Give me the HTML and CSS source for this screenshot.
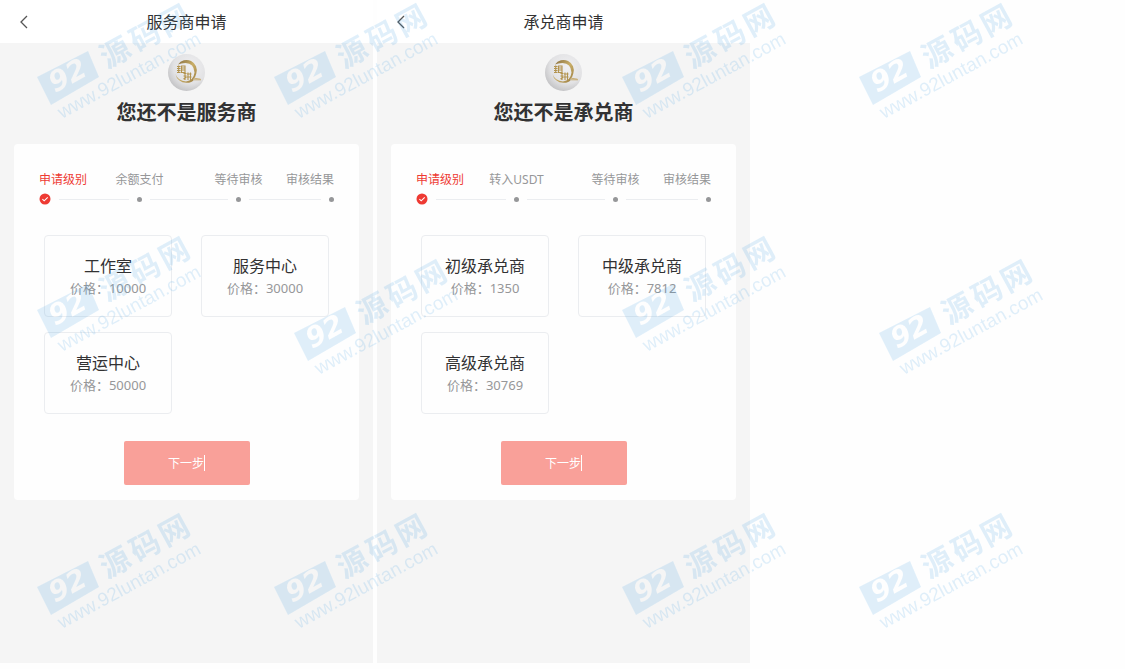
FILE: index.html
```html
<!DOCTYPE html>
<html lang="zh-CN">
<head>
  <meta charset="UTF-8">
  <meta name="viewport" content="width=device-width, initial-scale=1.0">
  <title>服务商申请</title>
  <link rel="stylesheet" href="styles.css">
</head>
<body>
  <!-- shared shapes -->
  <svg class="defs" width="0" height="0" aria-hidden="true">
    <defs>
      <radialGradient id="ball" cx="60%" cy="35%" r="75%">
        <stop offset="0" stop-color="#f0f0f2"/>
        <stop offset="0.6" stop-color="#e2e2e4"/>
        <stop offset="1" stop-color="#bababc"/>
      </radialGradient>
      <linearGradient id="gold" x1="0" y1="0" x2="1" y2="1">
        <stop offset="0" stop-color="#80673a"/>
        <stop offset="0.5" stop-color="#c9ae68"/>
        <stop offset="1" stop-color="#9a7c40"/>
      </linearGradient>
      <symbol id="logo" viewBox="0 0 37 37">
        <circle cx="18.5" cy="18.5" r="18.5" fill="url(#ball)"/>
        <path d="M10 10.5A10.3 10.3 0 0 1 28.3 19.5Q27.6 23.5 25 25.4L26.2 25.4Q24 28.7 18.5 28.8Q9.5 28.6 7.4 20Q10.2 27.2 18 27.4Q25.5 26.8 26.5 18.5Q26 9.3 17.5 9Q13 9 10 10.5Z" fill="url(#gold)"/>
        <path d="M26 24.2L32.5 25.2M26 25.8H33" fill="none" stroke="#c3a667" stroke-width="0.9"/>
        <g fill="none" stroke="#b39450" stroke-width="1.1">
          <path d="M9 12.5H12.5M9 14.5H12.5M9 16.5H12.5M10.7 11.5V18.5M9 18.5H12.5M13.5 12H17V18.5H13.5ZM13.5 14H17M13.5 16H17"/>
          <path d="M15.5 19.5H18.5M15.5 22H18.5M17 18.5V26M15.5 25L18.5 23M20 18.5V26M22.5 18.5V26M19 20H23.5M19 23H23.5"/>
        </g>
      </symbol>
      <symbol id="check" viewBox="0 0 12 12">
        <circle cx="6" cy="6" r="5.5" fill="#ee3a33"/>
        <path d="M3.4 6.1L5.2 7.8L8.7 4.4" fill="none" stroke="#fff" stroke-width="1.1"/>
      </symbol>
      <!-- number is cut out of the blue plate -->
      <mask id="plate" maskUnits="userSpaceOnUse" x="0" y="40" width="70" height="70">
        <rect x="0" y="40" width="70" height="70" fill="#fff"/>
        <text class="mark-num" transform="translate(18 93) rotate(-28.5)">92</text>
      </mask>
      <symbol id="mark" viewBox="0 0 170 124" overflow="visible">
        <g fill="#2a94e0" opacity="0.14">
          <path d="M0 77L51 51L62 77L14 105Z" mask="url(#plate)"/>
          <text class="mark-url" transform="translate(25 119) rotate(-28.5)">www.92luntan.com</text>
          <text class="mark-name" x="0 34 67" transform="translate(70 69) rotate(-28.5)">源码网</text>
        </g>
      </symbol>
    </defs>
  </svg>

  <main class="screens">
    <section class="screen">
      <header class="nav">
        <button class="back" type="button" aria-label="返回">
          <svg width="10" height="14" viewBox="0 0 10 14"><path d="M8 1L2 7L8 13"/></svg>
        </button>
        <h1 class="nav-title">服务商申请</h1>
      </header>
      <div class="intro">
        <svg class="logo" width="37" height="37" aria-hidden="true"><use href="#logo"/></svg>
        <h2 class="intro-title">您还不是服务商</h2>
      </div>
      <div class="card">
        <ol class="steps">
          <li class="step active">
            <span class="step-name">申请级别</span>
            <span class="step-track"><svg class="step-check" width="12" height="12"><use href="#check"/></svg></span>
          </li>
          <li class="step">
            <span class="step-name">余额支付</span>
            <span class="step-track"><i class="dot"></i></span>
          </li>
          <li class="step">
            <span class="step-name">等待审核</span>
            <span class="step-track"><i class="dot"></i></span>
          </li>
          <li class="step">
            <span class="step-name">审核结果</span>
            <span class="step-track"><i class="dot"></i></span>
          </li>
        </ol>
        <div class="levels">
          <button class="level" type="button"><span class="level-name">工作室</span><span class="level-price">价格：10000</span></button>
          <button class="level" type="button"><span class="level-name">服务中心</span><span class="level-price">价格：30000</span></button>
          <button class="level" type="button"><span class="level-name">营运中心</span><span class="level-price">价格：50000</span></button>
        </div>
        <button class="next" type="button">下一步</button>
      </div>
    </section>

    <section class="screen">
      <header class="nav">
        <button class="back" type="button" aria-label="返回">
          <svg width="10" height="14" viewBox="0 0 10 14"><path d="M8 1L2 7L8 13"/></svg>
        </button>
        <h1 class="nav-title">承兑商申请</h1>
      </header>
      <div class="intro">
        <svg class="logo" width="37" height="37" aria-hidden="true"><use href="#logo"/></svg>
        <h2 class="intro-title">您还不是承兑商</h2>
      </div>
      <div class="card">
        <ol class="steps">
          <li class="step active">
            <span class="step-name">申请级别</span>
            <span class="step-track"><svg class="step-check" width="12" height="12"><use href="#check"/></svg></span>
          </li>
          <li class="step">
            <span class="step-name">转入USDT</span>
            <span class="step-track"><i class="dot"></i></span>
          </li>
          <li class="step">
            <span class="step-name">等待审核</span>
            <span class="step-track"><i class="dot"></i></span>
          </li>
          <li class="step">
            <span class="step-name">审核结果</span>
            <span class="step-track"><i class="dot"></i></span>
          </li>
        </ol>
        <div class="levels">
          <button class="level" type="button"><span class="level-name">初级承兑商</span><span class="level-price">价格：1350</span></button>
          <button class="level" type="button"><span class="level-name">中级承兑商</span><span class="level-price">价格：7812</span></button>
          <button class="level" type="button"><span class="level-name">高级承兑商</span><span class="level-price">价格：30769</span></button>
        </div>
        <button class="next" type="button">下一步</button>
      </div>
    </section>
  </main>

  <!-- watermark layer -->
  <svg class="watermark" aria-hidden="true">
    <use href="#mark" x="37" y="0" width="170" height="124"/>
    <use href="#mark" x="274" y="0" width="170" height="124"/>
    <use href="#mark" x="622" y="0" width="170" height="124"/>
    <use href="#mark" x="859" y="0" width="170" height="124"/>
    <use href="#mark" x="37" y="233" width="170" height="124"/>
    <use href="#mark" x="294" y="256" width="170" height="124"/>
    <use href="#mark" x="622" y="233" width="170" height="124"/>
    <use href="#mark" x="879" y="256" width="170" height="124"/>
    <use href="#mark" x="37" y="510" width="170" height="124"/>
    <use href="#mark" x="274" y="510" width="170" height="124"/>
    <use href="#mark" x="622" y="510" width="170" height="124"/>
    <use href="#mark" x="859" y="510" width="170" height="124"/>
  </svg>
</body>
</html>
```

FILE: styles.css
```css
* {
  box-sizing: border-box;
}

body {
  position: relative;
  min-height: 100vh;
  margin: 0;
  background: #fefefe;
  color: #323233;
  font-family: "Noto Sans", "Noto Sans CJK SC", sans-serif;
}

button {
  padding: 0;
  border: none;
  background: none;
  color: inherit;
  font-family: inherit;
  cursor: pointer;
}

.defs {
  position: absolute;
}

.screens {
  display: grid;
  grid-template-columns: 1fr 1fr;
  gap: 4px;
  max-width: 750px;
}

.screen {
  min-height: calc(100vh - 6px);
  background: #f5f5f5;
}

/* top bar */
.nav {
  display: grid;
  grid-template-columns: 48px 1fr 48px;
  align-items: center;
  height: 43px;
  background: #fff;
}

.back {
  height: 43px;
}

.back svg {
  display: block;
  margin: 0 auto;
  fill: none;
  stroke: #555;
  stroke-width: 1.3;
}

.nav-title {
  margin: 0;
  font-size: 16px;
  font-weight: 400;
  line-height: 24px;
  text-align: center;
}

.intro {
  padding: 11px 0 17px;
  text-align: center;
}

.logo {
  display: block;
  margin: 0 auto 8px;
}

.intro-title {
  margin: 0;
  font-size: 20px;
  font-weight: 700;
  line-height: 28px;
}

.card {
  margin: 0 14px;
  padding: 26px 30px 15px;
  border-radius: 4px;
  background: #fefefe;
}

/* progress */
.steps {
  display: grid;
  grid-template-columns: minmax(0, 51fr) minmax(0, 99fr) minmax(0, 99fr) minmax(0, 46fr);
  margin: 0 -5px 27px;
  padding: 0;
  list-style: none;
  color: #969799;
  font-size: 12px;
  line-height: 20px;
}

.step {
  display: flex;
  flex-direction: column;
  align-items: center;
  white-space: nowrap;
}

.step:first-child {
  align-items: flex-start;
}

.step:last-child {
  align-items: flex-end;
}

.step.active {
  color: #ee3a33;
}

.step-track {
  display: flex;
  align-items: center;
  width: 100%;
  height: 18px;
}

.step-track::before,
.step-track::after {
  content: "";
  flex: 1;
  height: 1px;
  background: #ebedf0;
}

.step:first-child .step-track::before,
.step:last-child .step-track::after {
  display: none;
}

.step-check {
  margin-right: 8px;
}

.dot {
  width: 5px;
  height: 5px;
  margin: 0 8px;
  border-radius: 50%;
  background: #969799;
}

.step:last-child .dot {
  margin-right: 0;
}

/* levels */
.levels {
  display: grid;
  grid-template-columns: 1fr 1fr;
  gap: 15px 29px;
  margin-bottom: 27px;
}

.level {
  display: flex;
  flex-direction: column;
  align-items: center;
  justify-content: center;
  height: 82px;
  border: 1px solid #ebedf0;
  border-radius: 4px;
}

.level-name {
  font-size: 16px;
  line-height: 24px;
}

.level-price {
  color: #969799;
  font-size: 13px;
  line-height: 20px;
}

.next {
  display: flex;
  align-items: center;
  justify-content: center;
  width: 126px;
  height: 44px;
  margin: 0 auto;
  border-radius: 2px;
  background: #f9a099;
  color: #fff;
  font-size: 12px;
}

.next::after {
  content: "";
  width: 1px;
  height: 16px;
  background: #fff;
}

/* watermark */
.watermark {
  position: absolute;
  top: 0;
  left: 0;
  width: 100%;
  height: 100%;
  pointer-events: none;
}

.mark-url {
  font-family: "Liberation Sans", sans-serif;
  font-size: 19px;
}

.mark-name {
  font-family: "Noto Sans CJK SC", sans-serif;
  font-size: 30px;
  font-weight: 700;
}

.mark-num {
  fill: #000;
  font-family: "DejaVu Sans", sans-serif;
  font-size: 28px;
  font-style: italic;
  font-weight: 700;
}
```
